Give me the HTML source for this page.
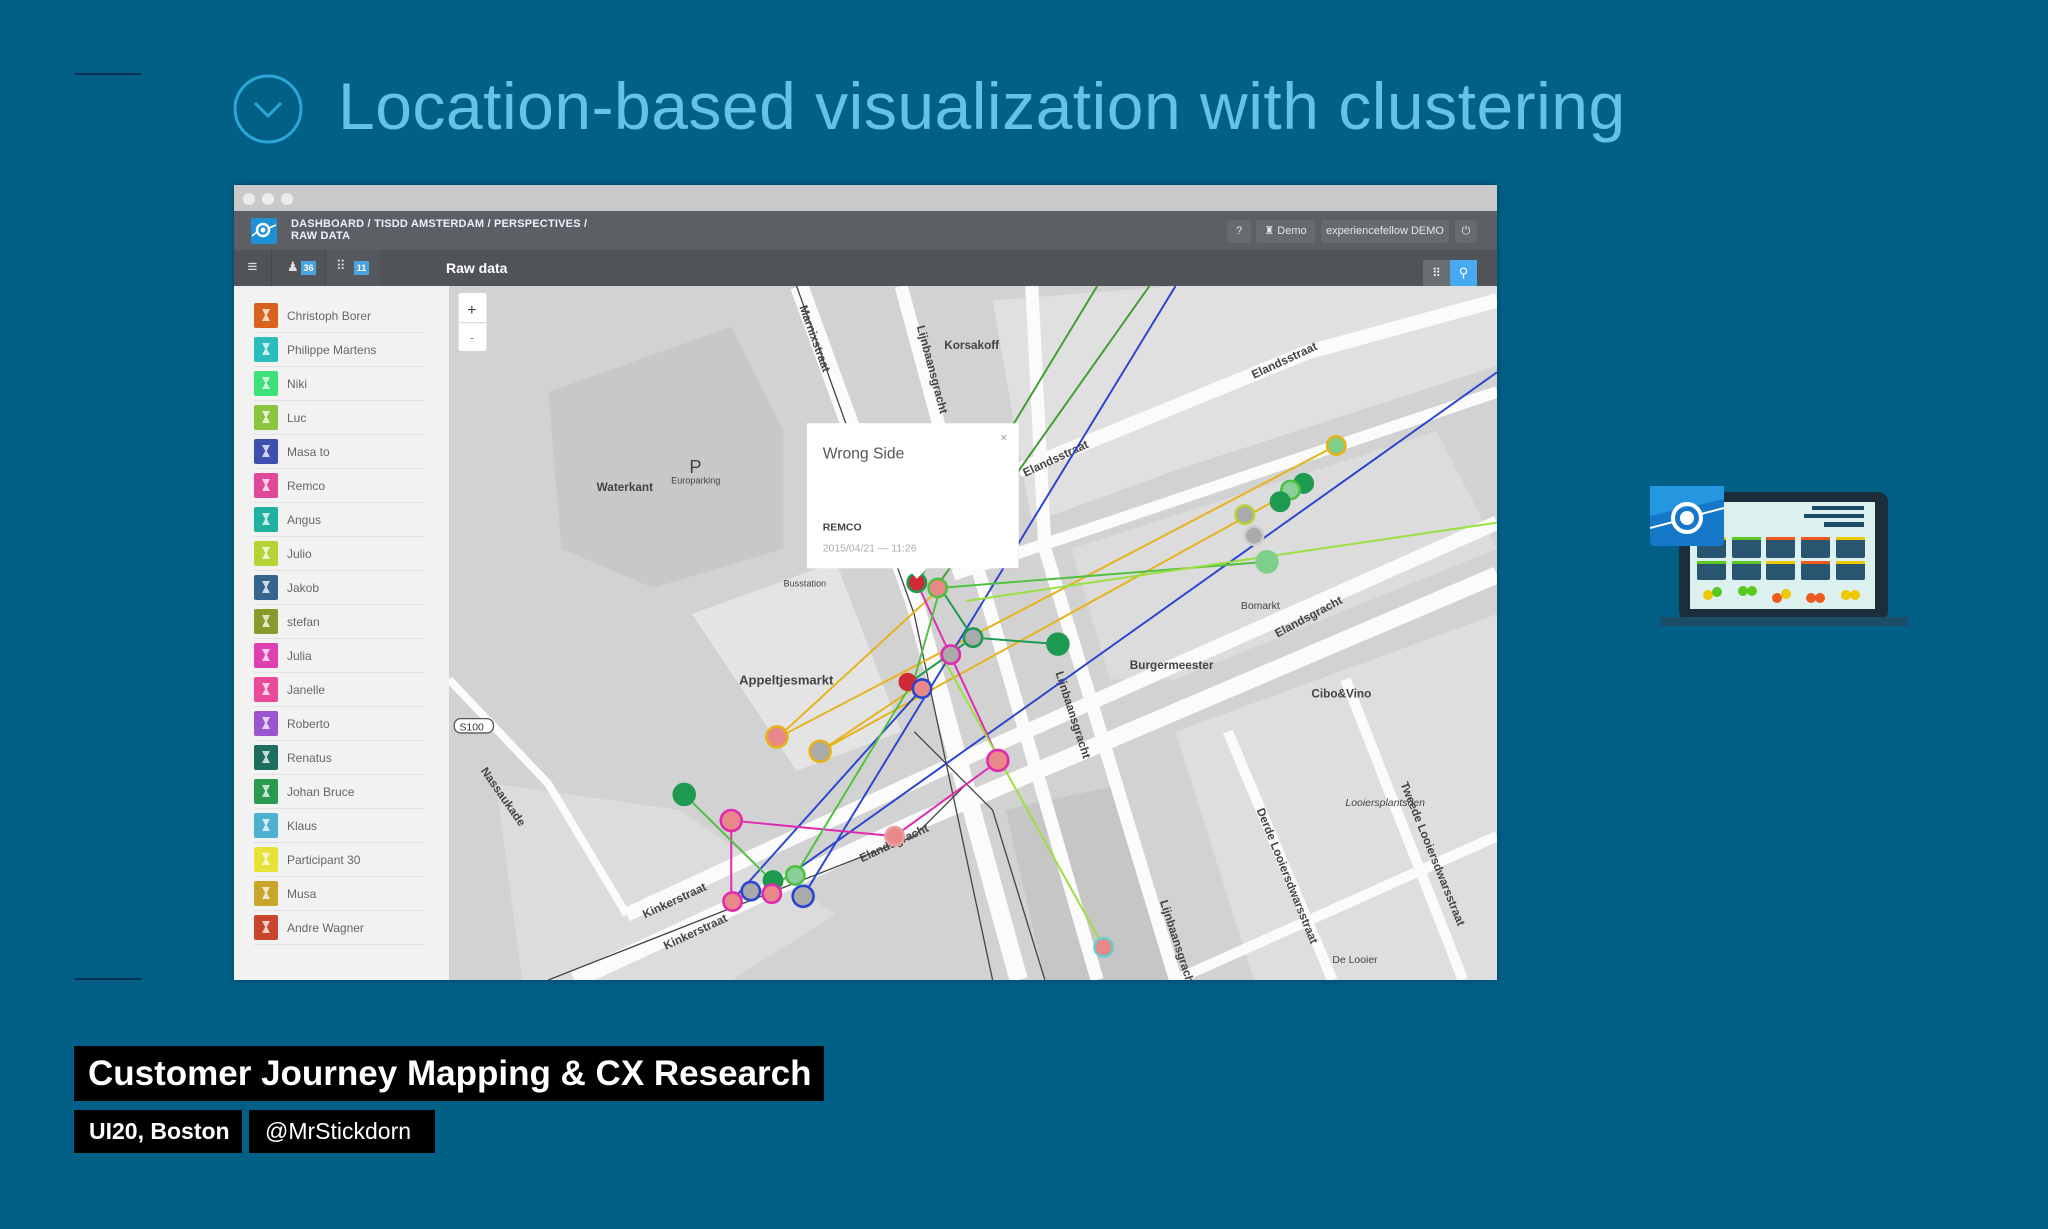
<!DOCTYPE html>
<html><head><meta charset="utf-8">
<style>
*{margin:0;padding:0;box-sizing:border-box}
html,body{width:2048px;height:1229px;overflow:hidden;background:#025f86;font-family:"Liberation Sans",sans-serif}
.abs{position:absolute}
.rule{position:absolute;left:75px;width:66px;height:2px;background:#0b2f50}
.title{left:338px;top:68px;font-size:66px;color:#63c3e4;font-weight:300;letter-spacing:0.5px;white-space:nowrap}
.win{left:234px;top:185px;width:1263px;height:795px;background:#d5d5d5;overflow:hidden;box-shadow:0 0 6px rgba(0,0,0,.3)}
.tb{left:0;top:0;width:100%;height:26px;background:#c9c9c9}
.dot{position:absolute;top:8px;width:12px;height:12px;border-radius:50%;background:#ececec}
.hd{left:0;top:26px;width:100%;height:39px;background:#5c6065}
.bc{left:57px;top:7px;color:#eef;font-size:11px;font-weight:bold;line-height:12px;letter-spacing:.2px}
.btn{position:absolute;top:9px;height:23px;background:#676b70;border-radius:3px;color:#e6e6e6;font-size:11px;line-height:23px;text-align:center}
.tl{left:0;top:65px;width:100%;height:36px;background:#505458}
.side{left:0;top:101px;width:215px;height:694px;background:#f2f2f3}
.row{position:absolute;left:20px;width:170px;height:34px;border-bottom:1px solid #e2e2e2}
.av{position:absolute;left:0;top:4px;width:24px;height:25px;border-radius:2px}
.av:after{content:"";position:absolute;left:8px;top:6px;width:8px;height:12px;background:rgba(255,255,255,.75);clip-path:polygon(0 0,100% 0,60% 50%,100% 100%,0 100%,40% 50%)}
.nm{position:absolute;left:33px;top:10px;font-size:12px;color:#666}
.blk{background:#000;color:#fff;font-weight:bold;position:absolute}
</style></head><body>
<div class="rule" style="top:73px"></div>
<div class="rule" style="top:978px"></div>
<svg class="abs" style="left:232px;top:73px" width="72" height="72" viewBox="0 0 72 72"><circle cx="36" cy="36" r="33" fill="none" stroke="#2aa7d6" stroke-width="3"/><path d="M23 30 L36 43 L49 30" fill="none" stroke="#2aa7d6" stroke-width="3"/></svg>
<div class="abs title">Location-based visualization with clustering</div>

<div class="abs win">
 <div class="abs tb"><div class="dot" style="left:9px"></div><div class="dot" style="left:28px"></div><div class="dot" style="left:47px"></div></div>
 <div class="abs hd">
  <svg class="abs" style="left:17px;top:7px" width="26" height="26" viewBox="0 0 26 26"><rect width="26" height="26" rx="2" fill="#1e90d6"/><circle cx="12" cy="12" r="6" fill="none" stroke="#fff" stroke-width="2.5"/><circle cx="12" cy="12" r="2.5" fill="#fff"/><path d="M1 18 L6 14 M18 10 L25 7" stroke="#fff" stroke-width="1.5"/></svg>
  <div class="abs bc">DASHBOARD / TISDD AMSTERDAM / PERSPECTIVES /<br>RAW DATA</div>
  <div class="btn" style="left:993px;width:24px">?</div>
  <div class="btn" style="left:1022px;width:59px">♜ Demo</div>
  <div class="btn" style="left:1087px;width:128px">experiencefellow DEMO</div>
  <div class="btn" style="left:1221px;width:22px">⏻</div>
 </div>
 <div class="abs tl">
  <div class="abs" style="left:0;top:0;width:38px;height:36px;border-right:1px solid #44474b;color:#ddd;font-size:17px;text-align:center;line-height:34px">≡</div>
  <div class="abs" style="left:38px;top:0;width:54px;height:36px;border-right:1px solid #44474b"><span class="abs" style="left:15px;top:9px;color:#ddd;font-size:13px">♟</span><span class="abs" style="left:29px;top:11px;width:15px;height:14px;background:#4aa3e0;color:#fff;font-size:9px;font-weight:bold;text-align:center;line-height:14px">36</span></div>
  <div class="abs" style="left:92px;top:0;width:54px;height:36px;background:#55595e"><span class="abs" style="left:10px;top:8px;color:#ddd;font-size:13px">⠿</span><span class="abs" style="left:28px;top:11px;width:15px;height:14px;background:#4aa3e0;color:#fff;font-size:9px;font-weight:bold;text-align:center;line-height:14px">11</span></div>
  <div class="abs" style="left:212px;top:10px;color:#fff;font-size:14px;font-weight:bold">Raw data</div>
  <div class="abs" style="left:1189px;top:10px;width:27px;height:26px;background:#6b6f74;color:#fff;font-size:12px;text-align:center;line-height:26px">⠿</div>
  <div class="abs" style="left:1216px;top:10px;width:27px;height:26px;background:#47a9f0;color:#fff;font-size:13px;text-align:center;line-height:26px">⚲</div>
 </div>
 <div class="abs side">
  <div class="row" style="top:13px"><div class="av" style="background:#d9631e"></div><div class="nm">Christoph Borer</div></div>
  <div class="row" style="top:47px"><div class="av" style="background:#2bbcbc"></div><div class="nm">Philippe Martens</div></div>
  <div class="row" style="top:81px"><div class="av" style="background:#3ee07a"></div><div class="nm">Niki</div></div>
  <div class="row" style="top:115px"><div class="av" style="background:#8bc53f"></div><div class="nm">Luc</div></div>
  <div class="row" style="top:149px"><div class="av" style="background:#3f4fb0"></div><div class="nm">Masa to</div></div>
  <div class="row" style="top:183px"><div class="av" style="background:#e0489a"></div><div class="nm">Remco</div></div>
  <div class="row" style="top:217px"><div class="av" style="background:#20b0a0"></div><div class="nm">Angus</div></div>
  <div class="row" style="top:251px"><div class="av" style="background:#b5d334"></div><div class="nm">Julio</div></div>
  <div class="row" style="top:285px"><div class="av" style="background:#35648f"></div><div class="nm">Jakob</div></div>
  <div class="row" style="top:319px"><div class="av" style="background:#8a9a2a"></div><div class="nm">stefan</div></div>
  <div class="row" style="top:353px"><div class="av" style="background:#e03fb0"></div><div class="nm">Julia</div></div>
  <div class="row" style="top:387px"><div class="av" style="background:#e94a9a"></div><div class="nm">Janelle</div></div>
  <div class="row" style="top:421px"><div class="av" style="background:#9a55d0"></div><div class="nm">Roberto</div></div>
  <div class="row" style="top:455px"><div class="av" style="background:#1d6e60"></div><div class="nm">Renatus</div></div>
  <div class="row" style="top:489px"><div class="av" style="background:#2a9a50"></div><div class="nm">Johan Bruce</div></div>
  <div class="row" style="top:523px"><div class="av" style="background:#4cb0d0"></div><div class="nm">Klaus</div></div>
  <div class="row" style="top:557px"><div class="av" style="background:#e6e23a"></div><div class="nm">Participant 30</div></div>
  <div class="row" style="top:591px"><div class="av" style="background:#c9a52a"></div><div class="nm">Musa</div></div>
  <div class="row" style="top:625px"><div class="av" style="background:#c8452e"></div><div class="nm">Andre Wagner</div></div>
 </div>
 <svg class="abs" style="left:215px;top:101px" width="1048" height="694" viewBox="344 219 802 531">
  <rect x="344" y="219" width="802" height="531" fill="#d2d2d2"/>
  <polygon points="420,300 560,250 600,330 600,420 500,450 430,420" fill="#c8c8c8"/>
  <polygon points="530,470 640,430 690,560 610,590" fill="#e4e4e4"/>
  <polygon points="760,230 900,219 1146,219 1146,280 900,360 790,400" fill="#e0e0e0"/>
  <polygon points="820,420 1100,330 1146,420 900,520 850,520" fill="#dcdcdc"/>
  <polygon points="900,560 1146,470 1146,750 960,750" fill="#dedede"/>
  <polygon points="380,600 520,620 640,700 560,750 400,750" fill="#dcdcdc"/>
  <polygon points="770,620 860,600 900,750 800,750" fill="#c6c6c6"/>
  <g stroke="#fbfbfb" fill="none" stroke-linecap="butt">
   <path d="M612 219 L700 460 L780 750" stroke-width="14"/>
   <path d="M690 219 L750 440 L840 750" stroke-width="10"/>
   <path d="M790 219 L800 420 L900 750" stroke-width="10"/>
   <path d="M440 750 L700 630 L1146 440" stroke-width="13"/>
   <path d="M480 700 L740 580 L1146 400" stroke-width="11"/>
   <path d="M780 360 L1000 270 L1146 230" stroke-width="11"/>
   <path d="M730 440 L1146 300" stroke-width="9"/>
   <path d="M900 750 L1146 640" stroke-width="8"/>
   <path d="M940 560 L1020 750" stroke-width="8"/>
   <path d="M1030 520 L1120 750" stroke-width="8"/>
   <path d="M344 520 L420 600 L480 700" stroke-width="6"/>
  </g>
  <g stroke="#444" stroke-width="1" fill="none"><path d="M700 560 L760 620 L800 750"/><path d="M420 750 L700 640 L740 600"/><path d="M610 219 L700 470 L760 750"/></g>
  <g font-family="Liberation Sans" fill="#444" font-size="9">
   <text x="457" y="376" font-weight="bold">Waterkant</text>
   <text x="514" y="370" font-size="7">Europarking</text>
   <text x="528" y="362" font-size="14">P</text>
   <text x="566" y="524" font-weight="bold" font-size="10">Appeltjesmarkt</text>
   <text x="723" y="267" font-weight="bold">Korsakoff</text>
   <text x="865" y="512" font-weight="bold">Burgermeester</text>
   <text x="1004" y="534" font-weight="bold">Cibo&amp;Vino</text>
   <text x="950" y="466" font-size="8">Bomarkt</text>
   <text x="600" y="449" font-size="7">Busstation</text>
   <text x="1030" y="617" font-size="8" font-style="italic">Looiersplantsoen</text>
   <text x="1020" y="737" font-size="8">De Looier</text>
   <text transform="translate(494,703) rotate(-25)" font-weight="bold">Kinkerstraat</text>
   <text transform="translate(510,727) rotate(-25)" font-weight="bold">Kinkerstraat</text>
   <text transform="translate(660,660) rotate(-25)" font-weight="bold">Elandsgracht</text>
   <text transform="translate(960,290) rotate(-25)" font-weight="bold">Elandsstraat</text>
   <text transform="translate(785,365) rotate(-25)" font-weight="bold">Elandsstraat</text>
   <text transform="translate(978,488) rotate(-28)" font-weight="bold">Elandsgracht</text>
   <text transform="translate(612,235) rotate(70)" font-weight="bold">Marnixstraat</text>
   <text transform="translate(702,250) rotate(75)" font-weight="bold">Lijnbaansgracht</text>
   <text transform="translate(808,515) rotate(72)" font-weight="bold">Lijnbaansgracht</text>
   <text transform="translate(888,690) rotate(72)" font-weight="bold">Lijnbaansgracht</text>
   <text transform="translate(962,620) rotate(68)" font-weight="bold">Derde Looiersdwarsstraat</text>
   <text transform="translate(1072,600) rotate(68)" font-weight="bold">Tweede Looiersdwarsstraat</text>
   <text transform="translate(368,590) rotate(55)" font-weight="bold">Nassaukade</text>
  </g>
  <rect x="348" y="550" width="30" height="11" rx="5" fill="#fff" stroke="#555"/><text x="352" y="559" font-size="8" font-family="Liberation Sans" fill="#333">S100</text>
  <g fill="none" stroke-width="1.5">
   <path d="M595 565 L1025 340 M628 575 L1000 370 M595 565 L720 450 M628 575 L710 520" stroke="#e6b21a"/>
   <path d="M615 686 L900 219 M560 690 L706 527 M590 680 L1146 285" stroke="#2a45d0"/>
   <path d="M702 446 L765 582 L685 640 L560 628 L560 690" stroke="#e02ab0"/>
   <path d="M524 608 L592 675 L609 670 L700 520 L720 450 L970 430" stroke="#50c040"/>
   <path d="M745 488 L810 493 M720 450 L745 488 L700 520" stroke="#1e9a50"/>
   <path d="M700 450 L840 219 M720 445 L880 219" stroke="#40a030"/>
   <path d="M720 500 L845 725 M740 460 L1146 400" stroke="#9ae040"/>
  </g>
  <g stroke-width="2">
   <circle cx="1023" cy="341" r="7" fill="#7dcf8a" stroke="#e6b21a"/>
   <circle cx="998" cy="370" r="7" fill="#1e9a50" stroke="#1e9a50"/>
   <circle cx="988" cy="375" r="7" fill="#8ad09a" stroke="#50c040"/>
   <circle cx="980" cy="384" r="7" fill="#1e9a50" stroke="#1e9a50"/>
   <circle cx="953" cy="394" r="7" fill="#aaa" stroke="#b5d334"/>
   <circle cx="960" cy="410" r="7" fill="#aaa" stroke="#ccc"/>
   <circle cx="970" cy="430" r="8" fill="#7dcf8a" stroke="#7dcf8a"/>
   <circle cx="810" cy="493" r="8" fill="#1e9a50" stroke="#1e9a50"/>
   <circle cx="702" cy="446" r="7" fill="#d02a35" stroke="#1e9a50"/>
   <circle cx="718" cy="450" r="7" fill="#e88888" stroke="#50c040"/>
   <circle cx="745" cy="488" r="7" fill="#aaa" stroke="#1e9a50"/>
   <circle cx="728" cy="501" r="7" fill="#aaa" stroke="#e02ab0"/>
   <circle cx="695" cy="522" r="6" fill="#d02a35" stroke="#d02a35"/>
   <circle cx="706" cy="527" r="7" fill="#e88888" stroke="#2a45d0"/>
   <circle cx="595" cy="564" r="8" fill="#e88888" stroke="#e6b21a"/>
   <circle cx="628" cy="575" r="8" fill="#aaa" stroke="#e6b21a"/>
   <circle cx="764" cy="582" r="8" fill="#e88888" stroke="#e02ab0"/>
   <circle cx="524" cy="608" r="8" fill="#1e9a50" stroke="#1e9a50"/>
   <circle cx="560" cy="628" r="8" fill="#e88888" stroke="#e02ab0"/>
   <circle cx="685" cy="640" r="7" fill="#e88888" stroke="#e8a0a0"/>
   <circle cx="592" cy="674" r="7" fill="#1e9a50" stroke="#1e9a50"/>
   <circle cx="609" cy="670" r="7" fill="#8ad09a" stroke="#50c040"/>
   <circle cx="575" cy="682" r="7" fill="#aaa" stroke="#2a45d0"/>
   <circle cx="591" cy="684" r="7" fill="#e88888" stroke="#e02ab0"/>
   <circle cx="615" cy="686" r="8" fill="#aaa" stroke="#2a45d0"/>
   <circle cx="561" cy="690" r="7" fill="#e88888" stroke="#e02ab0"/>
   <circle cx="845" cy="725" r="7" fill="#e88888" stroke="#6cc"/>
  </g>
  <polygon points="764,435 780,420 780,435" fill="#d02a35"/>
  <rect x="618" y="324" width="162" height="111" fill="#fff"/>
  <polygon points="695,435 710,435 702,443" fill="#fff"/>
  <text x="630" y="351" font-family="Liberation Sans" font-size="12" fill="#555">Wrong Side</text>
  <text x="766" y="338" font-family="Liberation Sans" font-size="9" fill="#999">×</text>
  <text x="630" y="406" font-family="Liberation Sans" font-size="8" font-weight="bold" fill="#444">REMCO</text>
  <text x="630" y="422" font-family="Liberation Sans" font-size="8" fill="#aaa">2015/04/21 — 11:26</text>
  <rect x="351" y="224" width="22" height="45" rx="2" fill="#fff" stroke="#ccc" stroke-width=".5"/>
  <line x1="351" y1="247" x2="373" y2="247" stroke="#ddd"/>
  <text x="358" y="241" font-family="Liberation Sans" font-size="12" fill="#444">+</text>
  <text x="360" y="262" font-family="Liberation Sans" font-size="10" fill="#888">-</text>
 </svg>
</div>

<svg class="abs" style="left:1640px;top:460px" width="280" height="180" viewBox="0 0 280 180">
 <rect x="39" y="32" width="209" height="129" rx="10" fill="#1c2d3b"/>
 <rect x="50" y="42" width="185" height="107" fill="#dcf0ee"/>
 <rect x="20" y="157" width="248" height="9" rx="2" fill="#1d4d66"/>
 <g fill="#1d4d66"><rect x="172" y="46" width="52" height="4"/><rect x="164" y="54" width="60" height="4"/><rect x="184" y="62" width="40" height="5"/></g>
 <g fill="#2a5570">
  <rect x="57" y="77" width="29" height="21" rx="2"/><rect x="92" y="77" width="29" height="21" rx="2"/><rect x="126" y="77" width="29" height="21" rx="2"/><rect x="161" y="77" width="29" height="21" rx="2"/><rect x="196" y="77" width="29" height="21" rx="2"/>
  <rect x="57" y="101" width="29" height="19" rx="2"/><rect x="92" y="101" width="29" height="19" rx="2"/><rect x="126" y="101" width="29" height="19" rx="2"/><rect x="161" y="101" width="29" height="19" rx="2"/><rect x="196" y="101" width="29" height="19" rx="2"/>
 </g>
 <g><rect x="57" y="77" width="29" height="3" fill="#f0c800"/><rect x="92" y="77" width="29" height="3" fill="#5ac820"/><rect x="126" y="77" width="29" height="3" fill="#f05a1e"/><rect x="161" y="77" width="29" height="3" fill="#f05a1e"/><rect x="196" y="77" width="29" height="3" fill="#f0c800"/>
 <rect x="57" y="101" width="29" height="3" fill="#5ac820"/><rect x="92" y="101" width="29" height="3" fill="#5ac820"/><rect x="126" y="101" width="29" height="3" fill="#f0c800"/><rect x="161" y="101" width="29" height="3" fill="#f05a1e"/><rect x="196" y="101" width="29" height="3" fill="#f0c800"/></g>
 <circle cx="68" cy="135" r="5" fill="#f0c800"/><circle cx="77" cy="132" r="5" fill="#5ac820"/>
 <circle cx="103" cy="131" r="5" fill="#5ac820"/><circle cx="112" cy="131" r="5" fill="#5ac820"/>
 <circle cx="137" cy="138" r="5" fill="#f05a1e"/><circle cx="146" cy="134" r="5" fill="#f0c800"/>
 <circle cx="171" cy="138" r="5" fill="#f05a1e"/><circle cx="180" cy="138" r="5" fill="#f05a1e"/>
 <circle cx="206" cy="135" r="5" fill="#f0c800"/><circle cx="215" cy="135" r="5" fill="#f0c800"/>
 <rect x="10" y="26" width="74" height="60" rx="4" fill="#1578c8"/>
 <path d="M10 26 H84 V39 L10 56 Z" fill="#2596e0"/>
 <circle cx="47" cy="58" r="14" fill="none" stroke="#fff" stroke-width="4"/><circle cx="47" cy="58" r="7" fill="#fff"/>
 <path d="M10 68 L33 62 M61 54 L84 48" stroke="#fff" stroke-width="2"/>
</svg>

<div class="blk" style="left:74px;top:1046px;width:750px;height:55px;font-size:35px;line-height:55px;padding-left:14px">Customer Journey Mapping &amp; CX Research</div>
<div class="blk" style="left:74px;top:1110px;width:168px;height:43px;font-size:23px;line-height:43px;padding-left:15px">UI20, Boston</div>
<div class="blk" style="left:249px;top:1110px;width:186px;height:43px;font-size:23px;line-height:43px;padding-left:16px;font-weight:normal">@MrStickdorn</div>
</body></html>
